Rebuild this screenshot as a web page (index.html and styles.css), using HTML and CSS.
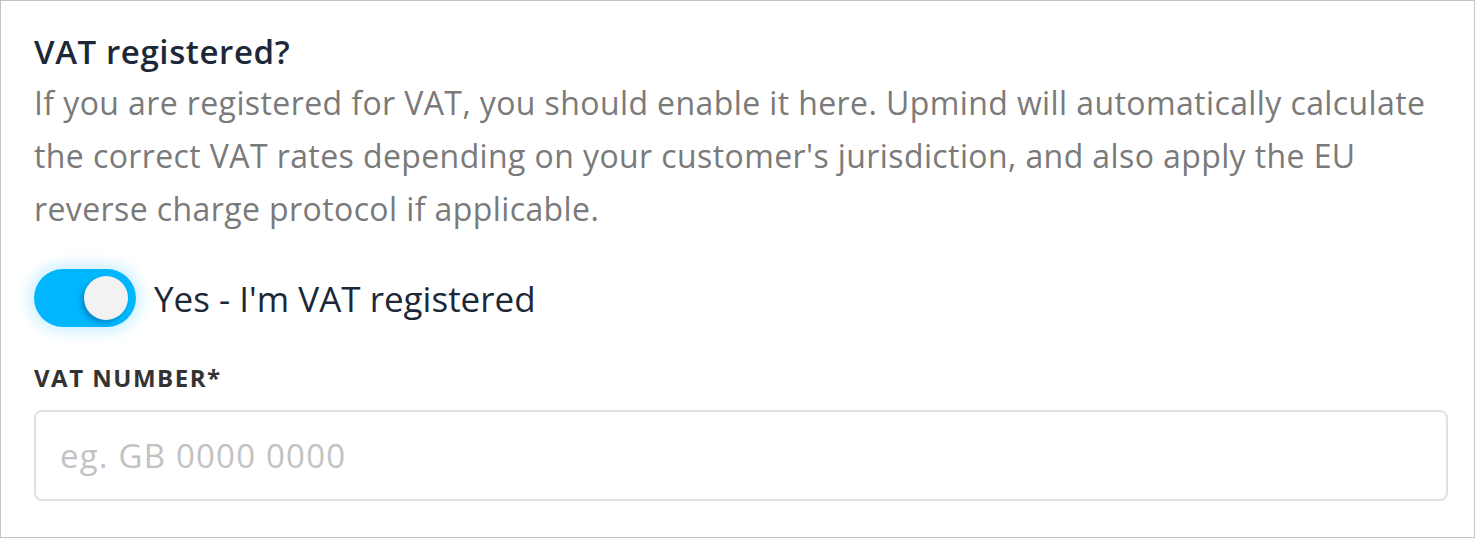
FILE: index.html
```html
<!DOCTYPE html>
<html lang="en">
<head>
<meta charset="utf-8">
<title>VAT registered</title>
<link rel="stylesheet" href="styles.css">
</head>
<body>
<div class="panel">
  <h2 class="title">VAT registered?</h2>
  <p class="desc">If you are registered for VAT, you should enable it here. Upmind will automatically calculate the correct VAT rates depending on your customer's jurisdiction, and also apply the EU reverse charge protocol if applicable.</p>
  <label class="switch-row">
    <span class="switch"><span class="knob"></span></span>
    <span class="switch-label">Yes - I'm VAT registered</span>
  </label>
  <div class="field">
    <label class="field-label" for="vat">VAT NUMBER*</label>
    <input class="field-input" id="vat" type="text" placeholder="eg. GB 0000 0000">
  </div>
</div>
</body>
</html>
```
FILE: styles.css
```css
html, body {
  margin: 0;
  padding: 0;
  background: #ffffff;
}
body {
  font-family: "Open Sans", "Noto Sans", sans-serif;
}
.panel {
  box-sizing: border-box;
  width: 1475px;
  height: 538px;
  border: 1px solid #c4c4c4;
  padding: 29px 26px 0 33px;
  display: flex;
  flex-direction: column;
}
.title {
  margin: 0;
  font-size: 33px;
  font-weight: 600;
  letter-spacing: 0.6px;
  line-height: 44px;
  color: #1c2837;
}
.desc {
  margin: 2px 0 0;
  font-size: 32px;
  letter-spacing: 0.4px;
  line-height: 53px;
  color: #7a7a7a;
  font-weight: 400;
}
.switch-row {
  display: flex;
  align-items: center;
  gap: 18px;
  margin-top: 34px;
}
.switch {
  width: 102px;
  height: 58px;
  border-radius: 29px;
  background: #00b7ff;
  box-shadow: 0 0 12px 7px rgba(0, 183, 255, 0.16);
  display: flex;
  align-items: center;
  justify-content: flex-end;
  padding-right: 8px;
  box-sizing: border-box;
  flex-shrink: 0;
}
.knob {
  width: 44px;
  height: 44px;
  border-radius: 50%;
  background: #f2f2f2;
  box-shadow: -3px 3px 5px rgba(0, 60, 100, 0.35);
}
.switch-label {
  font-size: 35px;
  color: #1c2837;
}
.field {
  display: flex;
  flex-direction: column;
  margin-top: 36px;
}
.field-label {
  font-size: 24px;
  font-weight: 700;
  letter-spacing: 1.5px;
  color: #333333;
  line-height: 30px;
  margin-bottom: 17px;
}
.field-input {
  box-sizing: border-box;
  width: 1414px;
  height: 91px;
  border: 2px solid #e1e1e1;
  border-radius: 8px;
  padding: 0 24px;
  font-family: "Open Sans", "Noto Sans", sans-serif;
  font-size: 33px;
  letter-spacing: 1.2px;
  color: #333;
  outline: none;
}
.field-input::placeholder {
  color: #c2c2c2;
}
```
